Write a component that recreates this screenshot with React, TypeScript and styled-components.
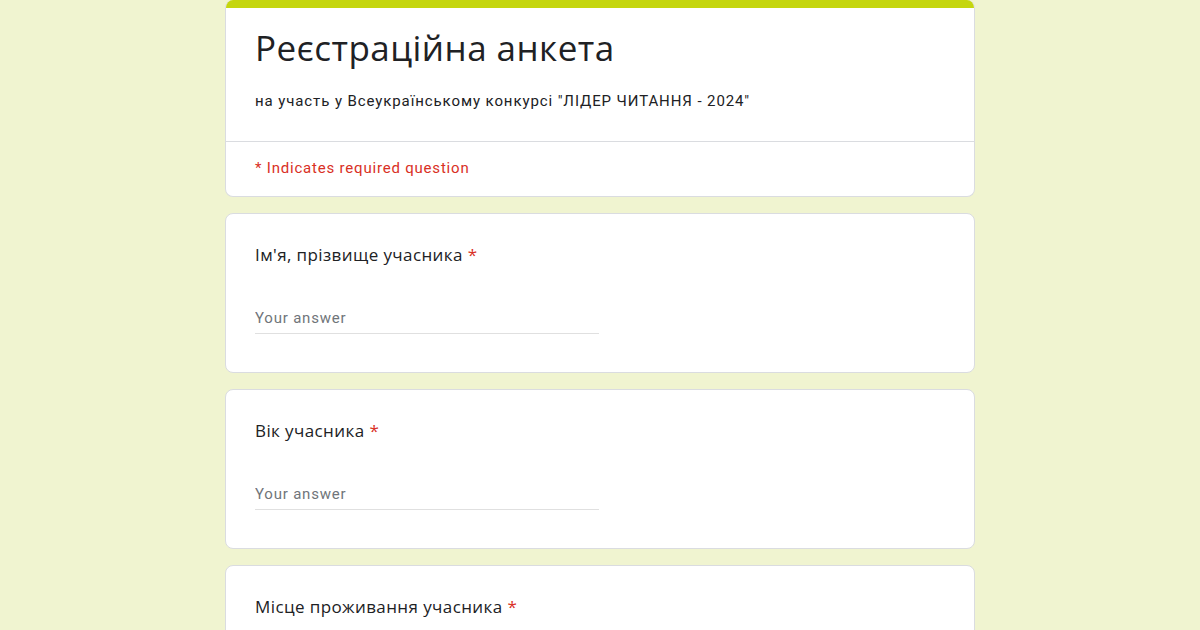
import React from 'react';
import styled, {createGlobalStyle} from 'styled-components';

const GlobalStyle = createGlobalStyle`
  body {
    margin: 0;
    background: #f0f4d0;
    font-family: Roboto, "Liberation Sans", sans-serif;
    color: #202124;
  }
`;

const Page = styled.div`
  width: 750px;
  margin: 0 auto;
  display: flex;
  flex-direction: column;
  gap: 16px;
`;

const Card = styled.div`
  background: #fff;
  border: 1px solid #dadce0;
  border-radius: 8px;
  overflow: hidden;
`;

const HeaderCard = styled(Card)`
  border-top: none;
`;

const AccentBar = styled.div`
  height: 8px;
  background: #c5d60e;
`;

const HeaderBody = styled.div`
  padding: 20px 29px 30px;
  border-bottom: 1px solid #dadce0;
`;

const Title = styled.h1`
  margin: 0;
  font-family: "Open Sans", "Noto Sans", sans-serif;
  font-weight: 400;
  font-size: 35px;
  line-height: 40px;
  letter-spacing: 0.45px;
  color: #202124;
`;

const Subtitle = styled.div`
  margin-top: 23px;
  font-size: 15px;
  line-height: 20px;
  letter-spacing: 0.9px;
  color: #202124;
`;

const RequiredNote = styled.div`
  padding: 16px 29px 18px;
  font-size: 15px;
  line-height: 20px;
  letter-spacing: 0.8px;
  color: #d93025;
`;

const QuestionCard = styled(Card)`
  padding: 29px 29px 38px;
`;

const Question = styled.div`
  font-family: "Open Sans", "Noto Sans", sans-serif;
  font-size: 17px;
  line-height: 24px;
  letter-spacing: 0.4px;
  color: #202124;
`;

const Star = styled.span`
  color: #d93025;
  margin-left: 5px;
`;

const AnswerInput = styled.input`
  display: block;
  margin-top: 41px;
  width: 344px;
  box-sizing: border-box;
  border: none;
  border-bottom: 1px solid #e0e0e0;
  padding: 0 0 5px;
  font-family: Roboto, "Liberation Sans", sans-serif;
  font-size: 15px;
  line-height: 20px;
  letter-spacing: 0.8px;
  background: transparent;
  outline: none;
  &::placeholder {
    color: #70757a;
  }
`;

const questions = [
  'Ім\'я, прізвище учасника',
  'Вік учасника',
  'Місце проживання учасника',
];

export default function App() {
  return (
    <>
      <GlobalStyle/>
      <Page>
        <HeaderCard>
          <AccentBar/>
          <HeaderBody>
            <Title>Реєстраційна анкета</Title>
            <Subtitle>на участь у Всеукраїнському конкурсі "ЛІДЕР ЧИТАННЯ - 2024"</Subtitle>
          </HeaderBody>
          <RequiredNote>* Indicates required question</RequiredNote>
        </HeaderCard>
        {questions.map((q) => (
          <QuestionCard key={q}>
            <Question>{q}<Star>*</Star></Question>
            <AnswerInput placeholder='Your answer'/>
          </QuestionCard>
        ))}
      </Page>
    </>
  );
}
